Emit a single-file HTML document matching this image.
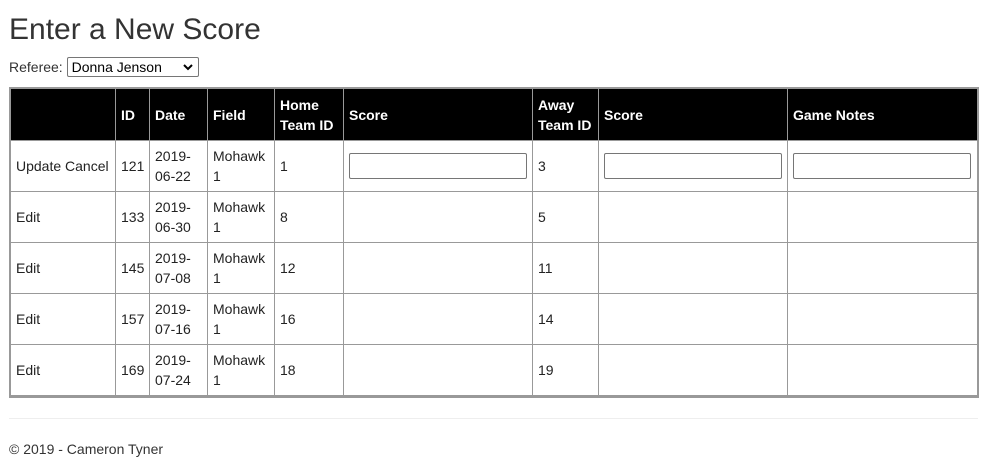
<!DOCTYPE html>
<html><head><style>
body{margin:0;font-family:"Liberation Sans",Arial,sans-serif;font-size:14px;color:#333;background:#fff;}
h1{position:absolute;left:9px;top:12px;margin:0;font-size:30px;font-weight:normal;line-height:36px;color:#333}
.ref{position:absolute;left:9px;top:57px;font-size:14px;line-height:20px}
.sel{display:inline-block;vertical-align:top;width:126px;height:18px;border:1px solid #767676;border-radius:2px;margin-left:0;font-size:14px;line-height:18px;padding-left:4px;box-sizing:content-box;position:relative;color:#000}
.sel svg{position:absolute;right:5px;top:6px}
.wrap{position:absolute;left:9px;top:87px;width:966px;border:2px solid #999;border-bottom-width:3px}
table{border-collapse:collapse;table-layout:fixed;width:967px;margin:-1px 0 -1px -1px}
td,th{border:1px solid #999;padding:0 5px;text-align:left;vertical-align:middle;line-height:20px;overflow:hidden}
th{background:#000;color:#fff;font-weight:bold;height:51px;padding:0 5px}
td{height:50px;color:#222}
input{width:178px;height:26px;border:1px solid #767676;border-radius:2px;box-sizing:border-box;margin:0;display:block}
hr{position:absolute;left:9px;top:418px;width:969px;margin:0;border:0;border-top:1px solid #eee}
.foot{position:absolute;left:9px;top:440px;line-height:18px}
</style></head><body>
<h1>Enter a New Score</h1>
<div class="ref">Referee: <span class="sel">Donna Jenson<svg width="10" height="7" viewBox="0 0 10 7"><path d="M1 1l4 4 4-4" stroke="#000" stroke-width="2" fill="none"/></svg></span></div>
<div class="wrap"><table>
<colgroup><col style="width:105px"><col style="width:34px"><col style="width:58px"><col style="width:67px"><col style="width:69px"><col style="width:189px"><col style="width:66px"><col style="width:189px"><col style="width:190px"></colgroup>
<tr><th></th><th>ID</th><th>Date</th><th>Field</th><th>Home Team ID</th><th>Score</th><th>Away Team ID</th><th>Score</th><th>Game Notes</th></tr>
<tr><td>Update Cancel</td><td>121</td><td>2019-06-22</td><td>Mohawk 1</td><td>1</td><td><input></td><td>3</td><td><input></td><td><input></td></tr>
<tr><td>Edit</td><td>133</td><td>2019-06-30</td><td>Mohawk 1</td><td>8</td><td></td><td>5</td><td></td><td></td></tr>
<tr><td>Edit</td><td>145</td><td>2019-07-08</td><td>Mohawk 1</td><td>12</td><td></td><td>11</td><td></td><td></td></tr>
<tr><td>Edit</td><td>157</td><td>2019-07-16</td><td>Mohawk 1</td><td>16</td><td></td><td>14</td><td></td><td></td></tr>
<tr><td>Edit</td><td>169</td><td>2019-07-24</td><td>Mohawk 1</td><td>18</td><td></td><td>19</td><td></td><td></td></tr>
</table></div>
<hr>
<div class="foot">© 2019 - Cameron Tyner</div>
</body></html>
